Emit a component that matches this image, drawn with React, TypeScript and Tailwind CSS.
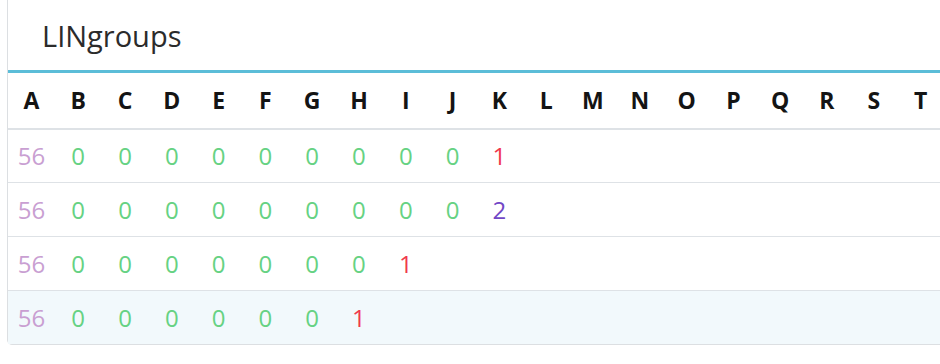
const letters = "ABCDEFGHIJKLMNOPQRST".split("");

type Cell = { v: string; c: string };

const pink = "text-[#c99fd2]";
const green = "text-[#66d283]";
const red = "text-[#f0394d]";
const purple = "text-[#7247c6]";

function row(zeros: number, last: string, lastColor: string): Cell[] {
  const cells: Cell[] = [{ v: "56", c: pink }];
  for (let i = 0; i < zeros; i++) cells.push({ v: "0", c: green });
  cells.push({ v: last, c: lastColor });
  return cells;
}

const rows = [
  row(9, "1", red),
  row(9, "2", purple),
  row(7, "1", red),
  row(6, "1", red),
];

export default function App() {
  return (
    <div className="h-[364px] w-[940px] overflow-hidden bg-white pl-[7px] font-['Open_Sans',sans-serif]">
      <div className="-mt-px w-[960px] rounded-b-[5px] border border-[#dcdfe2]">
        <div className="flex h-[70px] items-center pl-[34px] pt-[2px] text-[29px] text-[#2b2b2b]">
          LINgroups
        </div>
        <div className="h-[3px] bg-[#5bbdd8]" />
        <div className="grid h-[57px] grid-cols-[repeat(20,46.8px)] items-center border-b-2 border-[#dee2e6] text-[23px] font-bold text-[#141414]">
          {letters.map((l) => (
            <div key={l} className="text-center">
              {l}
            </div>
          ))}
        </div>
        {rows.map((r, i) => (
          <div
            key={i}
            className={
              "grid grid-cols-[repeat(20,46.8px)] items-center text-[24px] " +
              (i > 0 ? "h-[54px] border-t border-[#dee2e6] " : "h-[52px] ") +
              (i === rows.length - 1 ? "bg-[#f2f9fc]" : "")
            }
          >
            {r.map((cell, j) => (
              <div key={j} className={"text-center " + cell.c}>
                {cell.v}
              </div>
            ))}
          </div>
        ))}
      </div>
    </div>
  );
}
